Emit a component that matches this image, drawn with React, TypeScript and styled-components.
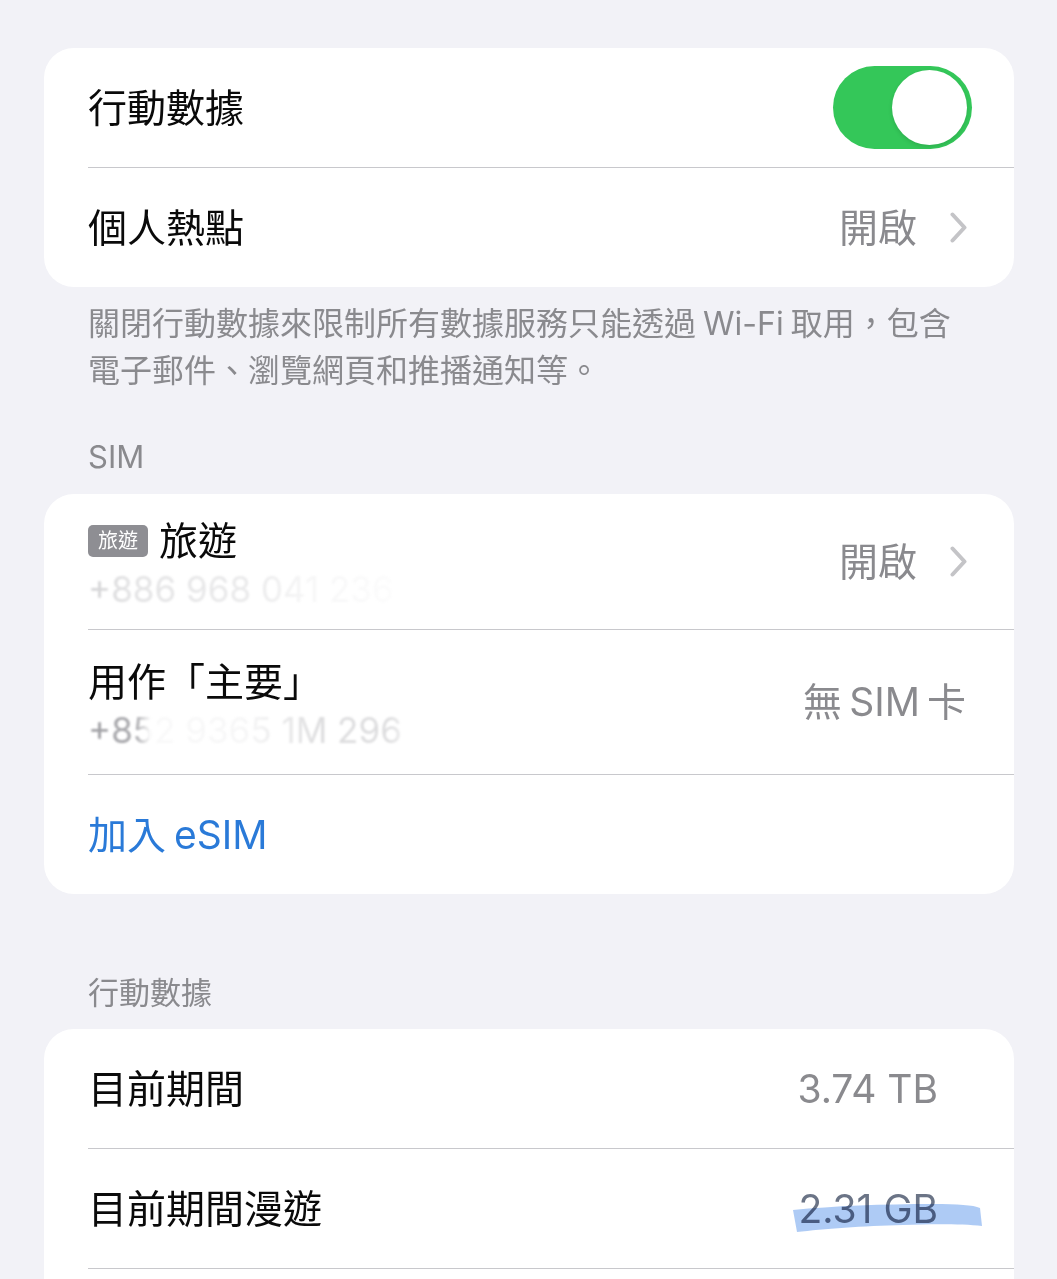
import React from "react";
import styled, { createGlobalStyle } from "styled-components";

const GlobalStyle = createGlobalStyle`
  html, body {
    margin: 0;
    padding: 0;
    background: #f2f2f7;
  }
  body {
    font-family: "Inter", "Noto Sans CJK TC", "Noto Sans", sans-serif;
    color: #000;
    -webkit-font-smoothing: antialiased;
  }
`;

const Page = styled.div`
  display: flex;
  flex-direction: column;
  padding: 48px 43px 0 44px;
  min-height: 1279px;
  box-sizing: border-box;
`;

const Card = styled.div`
  background: #fff;
  border-radius: 30px;
  display: flex;
  flex-direction: column;
  overflow: hidden;
`;

const BottomCard = styled(Card)`
  border-radius: 30px 30px 0 0;
  flex: 1;
`;

const Row = styled.div<{ $h: number; $pr: number }>`
  height: ${(p) => p.$h}px;
  padding: 0 ${(p) => p.$pr}px 0 44px;
  display: flex;
  align-items: center;
  justify-content: space-between;
  flex-shrink: 0;
`;

const Divider = styled.div`
  height: 1px;
  margin-left: 44px;
  background: #c8c8cc;
  flex-shrink: 0;
`;

const Title = styled.div<{ $blue?: boolean }>`
  font-size: 39px;
  line-height: 48px;
  word-spacing: -3px;
  color: ${(p) => (p.$blue ? "#2a7ad8" : "#0a0a0a")};
  white-space: nowrap;
`;

const Value = styled.div`
  font-size: 39px;
  line-height: 48px;
  color: #8a8a8e;
  white-space: nowrap;
  position: relative;
`;

const MarkedValue = styled(Value)`
  color: #6b7486;
`;

const Trail = styled.div`
  display: flex;
  align-items: center;
  gap: 33px;
`;

const Stack = styled.div`
  display: flex;
  flex-direction: column;
  margin-top: 7px;
`;

const TitleLine = styled.div`
  display: flex;
  align-items: center;
  gap: 11px;
`;

const Badge = styled.span`
  background: #8e8e93;
  color: #fff;
  font-size: 20px;
  line-height: 32px;
  height: 32px;
  padding: 0 10px;
  border-radius: 5px;
  white-space: nowrap;
`;

const Phone = styled.div<{ $fade: string }>`
  font-size: 35px;
  line-height: 48px;
  color: #8e8e93;
  white-space: nowrap;
  filter: blur(0.8px);
  -webkit-mask-image: ${(p) => p.$fade};
  mask-image: ${(p) => p.$fade};
`;

const Toggle = styled.div`
  width: 139px;
  height: 83px;
  border-radius: 42px;
  background: #34c759;
  display: flex;
  align-items: center;
  justify-content: flex-end;
  padding: 0 5px;
  box-sizing: border-box;
`;

const Knob = styled.div`
  width: 75px;
  height: 75px;
  border-radius: 50%;
  background: #fff;
  box-shadow: 0 2px 4px rgba(0, 0, 0, 0.12);
`;

const Footer = styled.div`
  margin-top: 13px;
  padding-left: 44px;
  font-size: 32px;
  line-height: 47px;
  color: #8a8a8e;
  white-space: nowrap;
  word-spacing: -2px;
`;

const SectionHeader = styled.div<{ $mt: number; $mb: number }>`
  margin-top: ${(p) => p.$mt}px;
  margin-bottom: ${(p) => p.$mb}px;
  padding-left: 44px;
  font-size: 31px;
  line-height: 40px;
  color: #8a8a8e;
`;

const Highlight = styled.svg`
  position: absolute;
  left: -5px;
  top: 14px;
  width: 190px;
  height: 34px;
  mix-blend-mode: multiply;
  pointer-events: none;
`;

const Chevron = () => (
  <svg width="17" height="31" viewBox="0 0 17 31" fill="none">
    <polyline
      points="2.5,2.5 14.5,15.5 2.5,28.5"
      stroke="#c4c4c7"
      strokeWidth="4"
      strokeLinecap="round"
      strokeLinejoin="round"
    />
  </svg>
);

const fade1 =
  "linear-gradient(to right, rgba(0,0,0,0.4) 0px, rgba(0,0,0,0.25) 40px, rgba(0,0,0,0.18) 170px, rgba(0,0,0,0.08) 220px, rgba(0,0,0,0.03) 300px, transparent 320px)";
const fade2 =
  "linear-gradient(to right, rgba(0,0,0,0.85) 0px, rgba(0,0,0,0.75) 48px, rgba(0,0,0,0.05) 62px, rgba(0,0,0,0.08) 160px, rgba(0,0,0,0.3) 230px, rgba(0,0,0,0.3) 300px, transparent 330px)";

export default function App() {
  return (
    <>
      <GlobalStyle />
      <Page>
        <Card>
          <Row $h={119} $pr={42}>
            <Title>行動數據</Title>
            <Toggle>
              <Knob />
            </Toggle>
          </Row>
          <Divider />
          <Row $h={119} $pr={47}>
            <Title>個人熱點</Title>
            <Trail>
              <Value>開啟</Value>
              <Chevron />
            </Trail>
          </Row>
        </Card>

        <Footer>
          關閉行動數據來限制所有數據服務只能透過 Wi-Fi 取用，包含
          <br />
          電子郵件、瀏覽網頁和推播通知等。
        </Footer>

        <SectionHeader $mt={43} $mb={17}>
          SIM
        </SectionHeader>
        <Card>
          <Row $h={135} $pr={47}>
            <Stack>
              <TitleLine>
                <Badge>旅遊</Badge>
                <Title>旅遊</Title>
              </TitleLine>
              <Phone $fade={fade1}>+886 968 041 236</Phone>
            </Stack>
            <Trail>
              <Value>開啟</Value>
              <Chevron />
            </Trail>
          </Row>
          <Divider />
          <Row $h={144} $pr={48}>
            <Stack>
              <Title>用作「主要」</Title>
              <Phone $fade={fade2}>+852 9365 1M 296</Phone>
            </Stack>
            <Value>{"無\u2009SIM\u2009卡"}</Value>
          </Row>
          <Divider />
          <Row $h={119} $pr={48}>
            <Title $blue>加入 eSIM</Title>
          </Row>
        </Card>

        <SectionHeader $mt={79} $mb={16}>
          行動數據
        </SectionHeader>
        <BottomCard>
          <Row $h={119} $pr={76}>
            <Title>目前期間</Title>
            <Value>3.74 TB</Value>
          </Row>
          <Divider />
          <Row $h={119} $pr={76}>
            <Title>目前期間漫遊</Title>
            <MarkedValue>
              2.31 GB
              <Highlight viewBox="0 0 190 34">
                <path
                  d="M0,11 C40,7 90,5 140,5 C165,5 180,6 187,9 L189,27 C170,25 140,25 110,26 C70,27 30,30 4,33 Z"
                  fill="rgba(120,168,238,0.6)"
                />
              </Highlight>
            </MarkedValue>
          </Row>
          <Divider />
          <Row $h={119} $pr={76} />
        </BottomCard>
      </Page>
    </>
  );
}
